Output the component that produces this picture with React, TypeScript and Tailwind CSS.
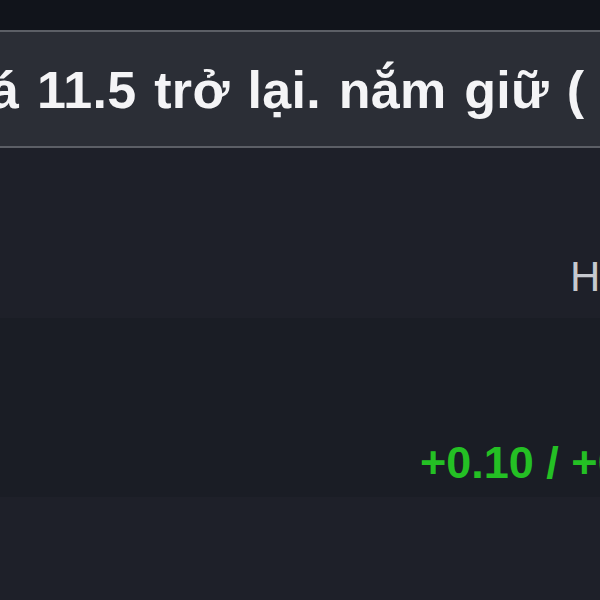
export default function App() {
  const font = { fontFamily: '"Liberation Sans", Arial, sans-serif' };
  return (
    <div className="w-[600px] h-[600px] overflow-hidden bg-[#1e2029] flex flex-col" style={font}>
      <div className="h-[30px] bg-[#11141b]" />
      <div className="h-[118px] bg-[#2b2e36] border-y-2 border-[#5c5f66] flex items-center overflow-hidden">
        <span className="whitespace-nowrap text-[52px] font-bold text-[#f4f4f6] leading-none ml-[-10px] mt-[2px] tracking-[0.3px] [word-spacing:3px]">
          á 11.5 trở lại. nắm giữ (
        </span>
      </div>
      <div className="h-[170px] bg-[#1e2029] flex items-start overflow-hidden">
        <span className="whitespace-nowrap text-[42px] text-[#c6c9cf] leading-none mt-[108px] ml-[570px]">
          H
        </span>
      </div>
      <div className="h-[179px] bg-[#1a1d25] flex overflow-hidden">
        <span className="whitespace-nowrap text-[45px] font-bold text-[#24c024] leading-none mt-[122px] ml-[420px]">
          +0.10 / +0.87%
        </span>
      </div>
      <div className="flex-1 bg-[#1e2029]" />
    </div>
  );
}
